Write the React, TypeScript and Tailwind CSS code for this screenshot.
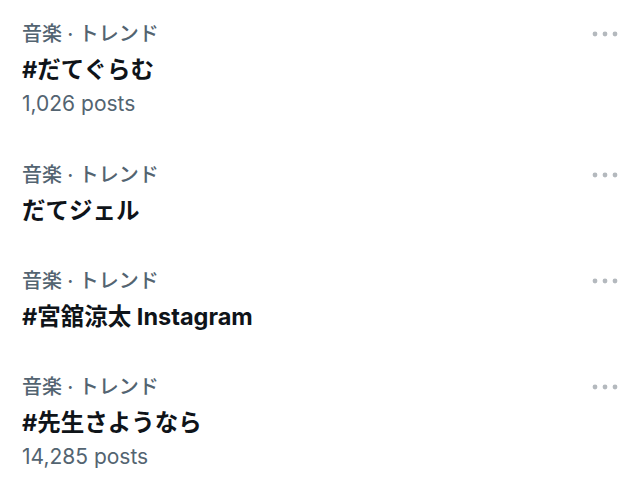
import React from 'react';

type Trend = {
  category: string;
  title: string;
  posts?: string;
};

const trends: Trend[] = [
  { category: '音楽 · トレンド', title: '#だてぐらむ', posts: '1,026 posts' },
  { category: '音楽 · トレンド', title: 'だてジェル' },
  { category: '音楽 · トレンド', title: '#宮舘涼太 Instagram' },
  { category: '音楽 · トレンド', title: '#先生さようなら', posts: '14,285 posts' },
];

const MoreDots: React.FC = () => (
  <svg width="26" height="6" viewBox="0 0 26 6" className="text-[#b4b9be]">
    <circle cx="3" cy="3" r="2.4" fill="currentColor" />
    <circle cx="13" cy="3" r="2.4" fill="currentColor" />
    <circle cx="23" cy="3" r="2.4" fill="currentColor" />
  </svg>
);

const TrendRow: React.FC<{ trend: Trend }> = ({ trend }) => (
  <div className="flex justify-between px-[22px] pt-[22px] pb-[21px]">
    <div className="flex flex-col">
      <span className="text-[20px] leading-[24px] font-medium text-[#536471]">{trend.category}</span>
      <span className="mt-[9px] text-[23.5px] leading-[30px] font-bold text-[#0f1419]">{trend.title}</span>
      {trend.posts && (
        <span className="mt-[7px] mb-[4px] text-[21px] leading-[24px] text-[#536471]">{trend.posts}</span>
      )}
    </div>
    <div className="flex h-[24px] items-center">
      <MoreDots />
    </div>
  </div>
);

const App: React.FC = () => {
  return (
    <div
      className="w-[640px] h-[480px] overflow-hidden bg-white"
      style={{ fontFamily: 'Inter, "Noto Sans CJK JP", sans-serif' }}
    >
      {trends.map((t, i) => (
        <TrendRow key={i} trend={t} />
      ))}
    </div>
  );
};

export default App;
